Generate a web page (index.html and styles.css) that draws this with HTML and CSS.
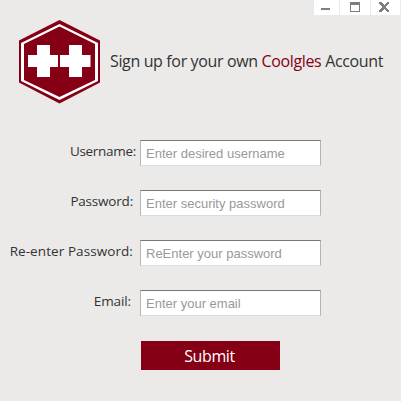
FILE: index.html
```html
<!DOCTYPE html>
<html lang="en">
<head>
<meta charset="utf-8">
<title>Coolgles Account</title>
<link rel="stylesheet" href="styles.css">
</head>
<body>
<main class="window">
  <div class="controls">
    <button class="control minimize" aria-label="Minimize"><svg width="25" height="15"><path d="M7 8h9v2H7z"/></svg></button>
    <button class="control maximize" aria-label="Maximize"><svg width="30" height="15"><path fill-rule="evenodd" d="M10 2h10v10H10zM11 5v6h8V5z"/></svg></button>
    <button class="control close" aria-label="Close"><svg width="29" height="15"><path d="M8 2h3v1h1v1h1v1h1V4h1V3h1V2h2v2h-1v1h-1v1h-1v2h1v1h1v1h1v2h-2v-1h-1v-1h-1V9h-1v1h-1v1h-1v1H8v-2h1V9h1V8h1V6h-1V5H9V4H8z"/></svg></button>
  </div>
  <header class="header">
    <svg class="logo" width="81" height="84" viewBox="19 20 81 84">
      <path fill="#860015" d="M59.5 20 100 40.5V82.500L59.500 103.500 19 82.500V40.500z"/>
      <path fill="#fff" d="M59.500 24 98 43V81L59.500 100 21 81V43z"/>
      <path fill="#860015" d="M59.500 26.500 95 44V80L59.500 97 24 80V44z"/>
      <path fill="#fff" d="M37 45h13v10h8v12h-8v10H37V67h-9V55h9zM69 45h13v10h8.500v12H82v10H69V67h-9V55h9z"/>
    </svg>
    <h1 class="title">Sign up for your own <span class="brand">Coolgles</span> Account</h1>
  </header>
  <form class="form">
    <div class="row"><label class="label username" for="username">Username:</label><input class="field" id="username" placeholder="Enter desired username"></div>
    <div class="row"><label class="label password" for="password">Password:</label><input class="field" id="password" placeholder="Enter security password"></div>
    <div class="row"><label class="label confirm" for="confirm">Re-enter Password:</label><input class="field" id="confirm" placeholder="ReEnter your password"></div>
    <div class="row"><label class="label email" for="email">Email:</label><input class="field" id="email" placeholder="Enter your email"></div>
    <button class="submit" type="button">Submit</button>
  </form>
</main>
</body>
</html>
```
FILE: styles.css
```css
* { box-sizing: border-box; }
body { margin: 0; background: #fff; font-family: "Open Sans", sans-serif; color: #333; overflow: hidden; }
.window { width: 401px; height: 401px; background: #ebeae8; }
.controls { display: flex; justify-content: flex-end; gap: 1px; height: 15px; padding-right: 1px; }
.control { height: 15px; border: 0; padding: 0; background: #fff; }
.control svg { display: block; fill: #7f7f7f; }
.minimize { width: 25px; }
.maximize { width: 30px; }
.close { width: 29px; }
.header { display: flex; padding: 5px 0 0 19px; height: 125px; }
.logo { flex: none; }
.title { margin: 30px 0 0 10px; font-size: 16px; line-height: 22px; font-weight: 400; white-space: nowrap; letter-spacing: -0.36px; }
.brand { color: #860015; }
.row { display: flex; height: 50px; }
.label { width: 140px; padding-right: 7px; text-align: right; font-size: 13.5px; line-height: 22px; white-space: nowrap; }
.username { padding-right: 4px; letter-spacing: -0.3px; }
.password { letter-spacing: -0.2px; }
.confirm { letter-spacing: 0.08px; }
.email { padding-right: 9px; letter-spacing: -0.1px; }
.field { width: 181px; height: 26px; padding: 1px 5px 0; border: 1px solid #b5b5b5; border-top: 1px solid #777; border-bottom-color: #dcdcdc; background: #fff; font: 13px "Liberation Sans", sans-serif; }
.field::placeholder { color: #999; opacity: 1; }
.submit { display: block; width: 139px; height: 29px; margin: 1px 0 0 141px; border: 0; padding: 1px 2px 0 0; background: #860015; color: #fff; font: 16px/28px "Open Sans", sans-serif; letter-spacing: -0.4px; }
```
